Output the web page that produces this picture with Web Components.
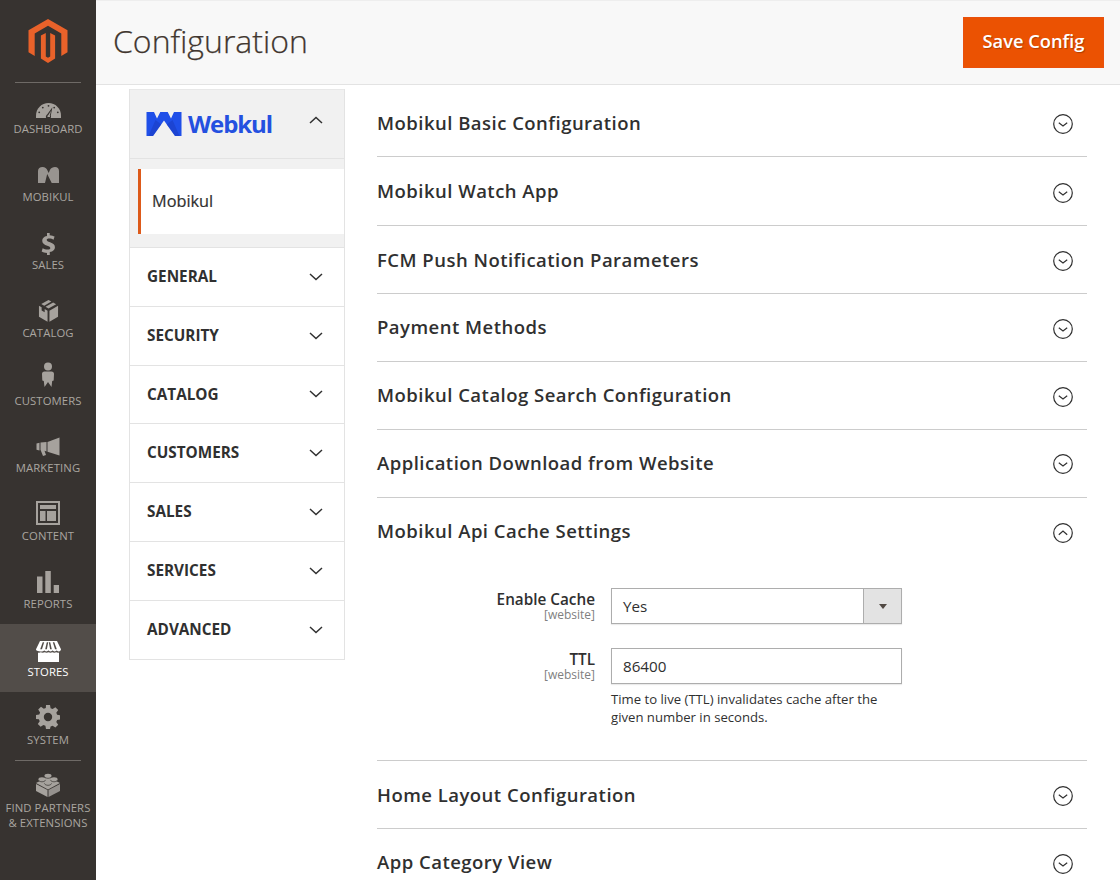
<!DOCTYPE html>
<html lang="en"><head><meta charset="utf-8"><title>Configuration</title>
<style>
html,body{margin:0;padding:0;height:880px;overflow:hidden;background:#fff;font-family:"Open Sans",sans-serif}
</style></head><body>
<admin-app>
  <admin-sidebar slot="side">
    <nav-item label="Dashboard" icon="dashboard"></nav-item>
    <nav-item label="Mobikul" icon="mobikul"></nav-item>
    <nav-item label="Sales" icon="sales"></nav-item>
    <nav-item label="Catalog" icon="catalog"></nav-item>
    <nav-item label="Customers" icon="customers"></nav-item>
    <nav-item label="Marketing" icon="marketing"></nav-item>
    <nav-item label="Content" icon="content"></nav-item>
    <nav-item label="Reports" icon="reports"></nav-item>
    <nav-item label="Stores" icon="stores" active></nav-item>
    <nav-item label="System" icon="system"></nav-item>
    <nav-item label="Find Partners<br>&amp; Extensions" icon="partners" divider></nav-item>
  </admin-sidebar>
  <page-header slot="head" title-text="Configuration" action="Save Config"></page-header>
  <config-tabs slot="tabs">
    <tab-row label="General"></tab-row>
    <tab-row label="Security"></tab-row>
    <tab-row label="Catalog"></tab-row>
    <tab-row label="Customers"></tab-row>
    <tab-row label="Sales"></tab-row>
    <tab-row label="Services"></tab-row>
    <tab-row label="Advanced"></tab-row>
  </config-tabs>
  <div slot="main">
    <config-section label="Mobikul Basic Configuration"></config-section>
    <config-section label="Mobikul Watch App"></config-section>
    <config-section label="FCM Push Notification Parameters" low></config-section>
    <config-section label="Payment Methods"></config-section>
    <config-section label="Mobikul Catalog Search Configuration"></config-section>
    <config-section label="Application Download from Website" high></config-section>
    <config-section label="Mobikul Api Cache Settings" open high>
      <config-field label="Enable Cache" kind="select" value="Yes"></config-field>
      <config-field label="TTL" kind="input" value="86400" note="Time to live (TTL) invalidates cache after the given number in seconds."></config-field>
    </config-section>
    <config-section label="Home Layout Configuration"></config-section>
    <config-section label="App Category View" high></config-section>
  </div>
</admin-app>
<script>
const D='#373330';
const ICONS={
dashboard:[25,15,3.5,'0 0 25 15',`<path fill="currentColor" d="M0 15v-2.500C0 5.500 5.600 0 12.500 0S25 5.500 25 12.500V15z"/><g fill="${D}"><circle cx="12.500" cy="2.800" r=".9"/><circle cx="6.800" cy="4.600" r=".9"/><circle cx="18.200" cy="4.600" r=".9"/><circle cx="3.200" cy="9.300" r=".9"/><circle cx="21.800" cy="9.300" r=".9"/><path d="M10 15c-.4-1.700.2-3 1.300-3.700L16.400 4.200 14.800 12.600c.4 1 .3 1.700-.1 2.400z"/></g><path fill="currentColor" d="M11.500 14c-.2-1 .3-1.700.9-2L15 7.700 13.800 12.500c.3.500.3 1 .1 1.500z"/>`],
mobikul:[21,16,.6,'0 0 21 16',`<path fill="currentColor" opacity=".88" d="M0 16V4C0 1.500 2 0 4.500 0S8.600 1.300 9.500 3.500L10.700 6 12 2.800C13 1 15 0 17 0c2.300 0 4 1.500 4 4v12h-7.300L9.200 7 7 16z"/>`],
sales:[16.600,24,1,'0 0 18 26',`<path fill="currentColor" d="M7.600 1h2.900v2.400c2.300.2 4.100.8 5.300 1.500l-1.100 3.500c-1.200-.7-2.900-1.300-4.800-1.300-1.800 0-2.600.7-2.600 1.500 0 1 1.100 1.500 3.600 2.400 3.600 1.200 5.300 2.800 5.300 5.400 0 2.600-1.900 4.700-5.600 5.200V25H7.600v-2.300c-2.300-.1-4.500-.8-5.800-1.600l1.100-3.500c1.400.8 3.300 1.500 5.300 1.500 1.800 0 3-.7 3-1.800 0-1-1-1.700-3.300-2.500-3.300-1.100-5.500-2.600-5.500-5.400 0-2.600 1.900-4.600 5.200-5.100z"/>`],
catalog:[21,23,0,'0 0 22 24',`<g fill="currentColor"><path d="M11 1 14 2.700 6.500 7 3.400 5.300z"/><path d="M15.900 3.700 19 5.400 11 10 7.900 8.200z"/><path d="M1 7v11.500L10 23.700V12.200l-3-1.700v3.300l-3.200-1.800V8.600z"/><path d="M21 7v11.500L12 23.700V12.200z"/></g>`],
customers:[14,26,-3.6,'0 0 14 26',`<g fill="currentColor"><circle cx="7" cy="4.500" r="4"/><path d="M3.500 9.500h7c1.600 0 2.500 1.100 2.500 2.500l-.3 6.500-1.500.5-.7 6L8 21.500 7 20l-1 1.500L3.500 25l-.7-6-1.500-.5L1 12c0-1.400.9-2.500 2.500-2.500z"/></g>`],
marketing:[24,20,.8,'0 0 24 20',`<g fill="currentColor"><path d="M23.500 .5v18l-12-3.800V5z"/><path d="M.5 6.500 3.500 5.800v7.800L.5 12.800z"/><path d="M4.500 5.500 10.500 5v9.400l-2-.6L10 18l-3 .9L4.500 12.800z"/></g>`],
content:[24,24,-1.400,'0 0 24 24',`<path fill="currentColor" fill-rule="evenodd" d="M0 0h24v24H0zM2 2v20h20V2z"/><path fill="currentColor" d="M4 4h16v4H4zM4 10h5.500v10H4zM11 10h9v10h-9z"/>`],
reports:[22,22,0,'0 0 22 22',`<path fill="currentColor" d="M0 5.500h5.500V22H0zM8.300 0h5.500v22H8.300zM16.700 14H22v8h-5.300z"/>`],
stores:[25,21,1.300,'0 0 25 21',`<path fill="currentColor" d="M4 0h17l4 8.300c0 1.200-1 2.200-2.200 2.200-1 0-1.700-.5-2-1.200-.4.700-1.200 1.200-2.100 1.200s-1.700-.5-2.100-1.200c-.4.700-1.200 1.200-2.100 1.200s-1.700-.5-2.100-1.200c-.4.700-1.200 1.200-2.100 1.200s-1.700-.5-2.100-1.200c-.3.700-1 1.200-2 1.200C1 10.500 0 9.500 0 8.300z"/><path fill="currentColor" d="M2 11.500c.9.300 2 .2 2.800-.3.900.6 2.900.6 3.900 0 1 .6 2.900.6 3.800 0 1 .6 2.900.6 3.800 0 1 .6 2.900.6 3.900 0 .8.500 1.900.6 2.800.3V21H2z"/><g style="fill:#524d49"><path d="M6.700 1.200h1.500L6 8.300H4.200z"/><path d="M10.800 1.200h1.400L10.900 8.300H9.200z"/><path d="M12.800 1.200h1.400l1.600 7.100h-1.700z"/><path d="M16.800 1.200h1.500l2.500 7.100H19z"/></g>`],
system:[24,24,-.6,'0 0 24 24',`<path fill="currentColor" fill-rule="evenodd" d="M10 0h4l.6 3.300 2 .8L19.400 2.200l2.800 2.800-1.900 2.800.8 2 3.300.6v4l-3.300.6-.8 2 1.900 2.800-2.800 2.800-2.800-1.900-2 .8L14 24h-4l-.6-3.300-2-.8-2.800 1.900-2.800-2.800 1.900-2.800-.8-2L0 14v-4l3.300-.6.800-2-1.900-2.800 2.800-2.800 2.800 1.900 2-.8zM12 7.800a4.200 4.200 0 1 0 0 8.400 4.200 4.200 0 0 0 0-8.400z"/>`],
partners:[24,24,0,'0 0 24 24',`<g fill="currentColor"><path d="M12 4 24 10 12 16.500 0 10z"/><path d="M0 11v7l11.500 6v-7z"/><path d="M24 11v7l-11.500 6v-7z" opacity=".85"/><ellipse cx="12" cy="3" rx="3.600" ry="2.300"/><ellipse cx="6" cy="6.500" rx="3.600" ry="2.300"/><ellipse cx="18" cy="6.500" rx="3.600" ry="2.300"/><ellipse cx="12" cy="10" rx="3.600" ry="2.300"/></g><g fill="none" stroke="${D}" stroke-width=".7"><path d="M8.400 3.400c.4 1.200 2 1.900 3.600 1.900s3.200-.7 3.600-1.900"/><path d="M2.400 6.900c.4 1.200 2 1.900 3.600 1.900s3.200-.7 3.600-1.900"/><path d="M14.400 6.900c.4 1.200 2 1.900 3.600 1.900s3.200-.7 3.600-1.900"/><path d="M8.400 10.400c.4 1.200 2 1.900 3.600 1.900s3.200-.7 3.600-1.900"/></g>`]
};
const chev=(up)=>`<svg width="14" height="8" viewBox="0 0 14 8" style="display:block"><path fill="none" stroke="#303030" stroke-width="1.500" d="${up?'M1 7 7 1.500 13 7':'M1 1 7 6.500 13 1'}"/></svg>`;

class Base extends HTMLElement{
  render(html){ if(!this.shadowRoot) this.attachShadow({mode:'open'}); this.shadowRoot.innerHTML=html; }
}
class AdminApp extends Base{ connectedCallback(){ this.render(`<style>
:host{display:grid;grid-template-columns:96px 1fr;width:1120px;height:880px;overflow:hidden}
.col{display:flex;flex-direction:column;min-width:0}
.body{display:grid;grid-template-columns:216px 710px;column-gap:32px;padding:4px 0 0 33px;align-items:start}
.main{padding-top:.15px}
</style>
<slot name="side"></slot>
<div class="col"><slot name="head"></slot>
<div class="body"><slot name="tabs"></slot><div class="main"><slot name="main"></slot></div></div></div>`);} }
class AdminSidebar extends Base{ connectedCallback(){ this.render(`<style>
:host{display:flex;flex-direction:column;background:#373330;height:880px;color:#aaa6a0}
.logo{height:82px;display:flex;justify-content:center;padding-top:19px;box-sizing:border-box}
hr{margin:0 15px;border:0;border-top:1px solid #6e6a66;height:0}
.items{display:flex;flex-direction:column;margin-top:-2px}
</style>
<div class="logo"><svg width="40" height="45" viewBox="0 0 40 45" style="display:block"><path fill="#e9622a" d="M20 0 39.500 11.200V33.300L33.300 36.900V14.500L20 6.800 6.700 14.500V36.900L.500 33.300V11.200z"/><path fill="#e9622a" d="M12.900 16.600 17.800 13.900V37.500L20 38.800 22.200 37.500V13.900L27.100 16.600V39.500L20 44 12.900 39.500z"/></svg></div>
<hr><div class="items"><slot></slot></div>`);} }
class NavItem extends Base{ connectedCallback(){ const a=this.hasAttribute('active'),d=this.hasAttribute('divider'); const [w,h,off,vb,body]=ICONS[this.getAttribute('icon')]; this.render(`<style>
:host{display:block;width:96px;box-sizing:border-box;height:${d?'auto':'67.9px'};background:${a?'#524d49':'transparent'};color:${a?'#fff':'#aaa6a0'}}
.in{display:flex;flex-direction:column;align-items:center;height:100%;box-sizing:border-box}
hr{width:66px;margin:0;border:0;border-top:1px solid #6e6a66;height:0}
.ic{height:26px;margin-top:${d?'11px':'13px'};display:flex;align-items:center;justify-content:center;color:${a?'#fff':'#a6a29d'}}
svg{display:block;flex:none}
.t{font-size:11.300px;line-height:15px;text-transform:uppercase;text-align:center;margin-top:${d?'2.500px':'1px'};white-space:nowrap;letter-spacing:.1px}
</style><div class="in">${d?'<hr>':''}<div class="ic"><svg width="${w}" height="${h}" viewBox="${vb}" style="margin-top:${off*2}px">${body}</svg></div><div class="t">${this.getAttribute('label')}</div></div>`);} }
class PageHeader extends Base{ connectedCallback(){ this.render(`<style>
:host{display:flex;justify-content:space-between;align-items:center;height:85px;box-sizing:border-box;background:#f8f8f8;border-bottom:1px solid #e3e3e3;border-top:1px solid #eee;padding:0 16px 0 17px}
h1{margin:0 0 4px;font-weight:300;font-size:32px;color:#41362f;line-height:40px;-webkit-text-stroke:.25px #41362f}
button{all:unset;width:141px;height:51px;background:#eb5202;color:#fff;font-family:"Open Sans",sans-serif;font-size:18.300px;font-weight:600;text-align:center;line-height:24px;padding-bottom:4px;box-sizing:border-box;border:1px solid #e9500c;text-shadow:1px 1px 1px rgba(0,0,0,.25)}
</style><h1>${this.getAttribute('title-text')}</h1><button>${this.getAttribute('action')}</button>`);} }
class ConfigTabs extends Base{ connectedCallback(){ this.render(`<style>
:host{display:block;width:216px;box-sizing:border-box;border:1px solid #e3e3e3;border-top:0;background:#fff}
.vendor{height:70px;box-sizing:border-box;background:#f1f1f1;border-bottom:1px solid #e3e3e3;border-top:1px solid #e8e8e8;display:flex;align-items:center;justify-content:space-between;padding:0 21px 0 16px}
.brand{display:flex;align-items:center;gap:6px;margin-top:-1px}
.brand span{font-family:"Open Sans",sans-serif;font-weight:700;font-size:24px;color:#2450e0;letter-spacing:-1.100px;line-height:24px}
.up{margin-bottom:8px}
.sub{background:#f1f1f1;padding:10px 0 13px 8px;border-bottom:1px solid #e3e3e3}
.item{height:65px;box-sizing:border-box;padding-bottom:2px;background:#fff;border-left:3px solid #dd5a1a;display:flex;align-items:center;padding-left:11px;font-size:16.300px;font-weight:400;color:#303030;-webkit-text-stroke:.2px #303030}
</style>
<div class="vendor"><div class="brand"><svg width="36" height="24" viewBox="0 0 35 24" style="display:block"><path fill="#1f4fe8" d="M0 0H7.500L10.500 6.500 13.800 0H21.200L24.500 6.500 27.500 0H35V24H28.500L17.500 8.500 6.500 24H0Z"/><path fill="#1a3cc0" d="M6.500 24 12 16.300 14.800 12.400 9 8 2 24ZM28.500 24 23 16.300 20.200 12.400 26 8 33 24Z" opacity=".55"/></svg><span>Webkul</span></div><div class="up">${chev(true)}</div></div>
<div class="sub"><div class="item">Mobikul</div></div>
<slot></slot>`);} }
class TabRow extends Base{ connectedCallback(){ this.render(`<style>
:host{display:flex;height:58.780px;box-sizing:border-box;border-bottom:1px solid #e3e3e3;align-items:center;justify-content:space-between;padding:0 21px 0 17px;font-weight:700;font-size:15.300px;color:#303030;text-transform:uppercase}
:host(:last-child){border-bottom:0}
span{margin-bottom:1.500px}
</style><span>${this.getAttribute('label')}</span>${chev(false)}`);} }
class ConfigSection extends Base{ connectedCallback(){ const o=this.hasAttribute('open'),hi=this.hasAttribute('high'),lo=this.hasAttribute('low'); this.render(`<style>
:host{display:block;border-bottom:1px solid #cccccc;box-sizing:border-box}
:host(:last-child){border-bottom:0}
.h{height:67.200px;box-sizing:border-box;padding-bottom:${hi?2:0}px;display:flex;align-items:center;justify-content:space-between;padding-right:14px}
h2{margin:${lo?2:0}px 0 0;font-size:18.500px;font-weight:600;color:#303030;letter-spacing:.48px;line-height:24px}
svg{display:block;margin-top:3.500px}
.b{padding:23px 0 33.600px 0}
</style><div class="h"><h2>${this.getAttribute('label')}</h2><svg width="20" height="20" viewBox="0 0 20 20"><circle cx="10" cy="10" r="9.300" fill="none" stroke="#303030" stroke-width="1.200"/><path fill="none" stroke="#303030" stroke-width="1.200" d="${o?'M5.800 11.800 10 8 14.200 11.800':'M5.800 8.800 10 12 14.200 8.800'}"/></svg></div>${o?'<div class="b"><slot></slot></div>':''}`);} }
class ConfigField extends Base{ connectedCallback(){ const k=this.getAttribute('kind'),n=this.getAttribute('note'),v=this.getAttribute('value'); this.render(`<style>
:host{display:grid;grid-template-columns:218px 291px;column-gap:16px;margin-bottom:24px}
:host(:last-child){margin-bottom:0}
.l{text-align:right;padding-top:2px}
.l b{display:block;font-size:15.300px;font-weight:600;color:#303030;line-height:19px}
.l i{display:block;font-style:normal;font-size:12px;color:#808080;line-height:12px}
.f{height:36px;box-sizing:border-box;border:1px solid #adadad;background:#fff;display:flex;align-items:center;justify-content:space-between;padding-left:11px;font-size:15.200px;color:#303030;box-shadow:0 1px 1px rgba(0,0,0,.08)}
.a{width:37px;height:34px;background:#e3e3e3;border-left:1px solid #adadad;display:flex;align-items:center;justify-content:center}
.a s{display:block;width:0;height:0;border:4.500px solid transparent;border-top:5px solid #514943;border-bottom:0}
p{margin:6px 0 0;font-size:13.150px;line-height:18px;color:#303030}
</style><div class="l"><b>${this.getAttribute('label')}</b><i>[website]</i></div><div><div class="f"><span>${v}</span>${k==='select'?'<div class="a"><s></s></div>':''}</div>${n?`<p>${n}</p>`:''}</div>`);} }
customElements.define('admin-app',AdminApp);
customElements.define('admin-sidebar',AdminSidebar);
customElements.define('nav-item',NavItem);
customElements.define('page-header',PageHeader);
customElements.define('config-tabs',ConfigTabs);
customElements.define('tab-row',TabRow);
customElements.define('config-section',ConfigSection);
customElements.define('config-field',ConfigField);
</script>
</body></html>
